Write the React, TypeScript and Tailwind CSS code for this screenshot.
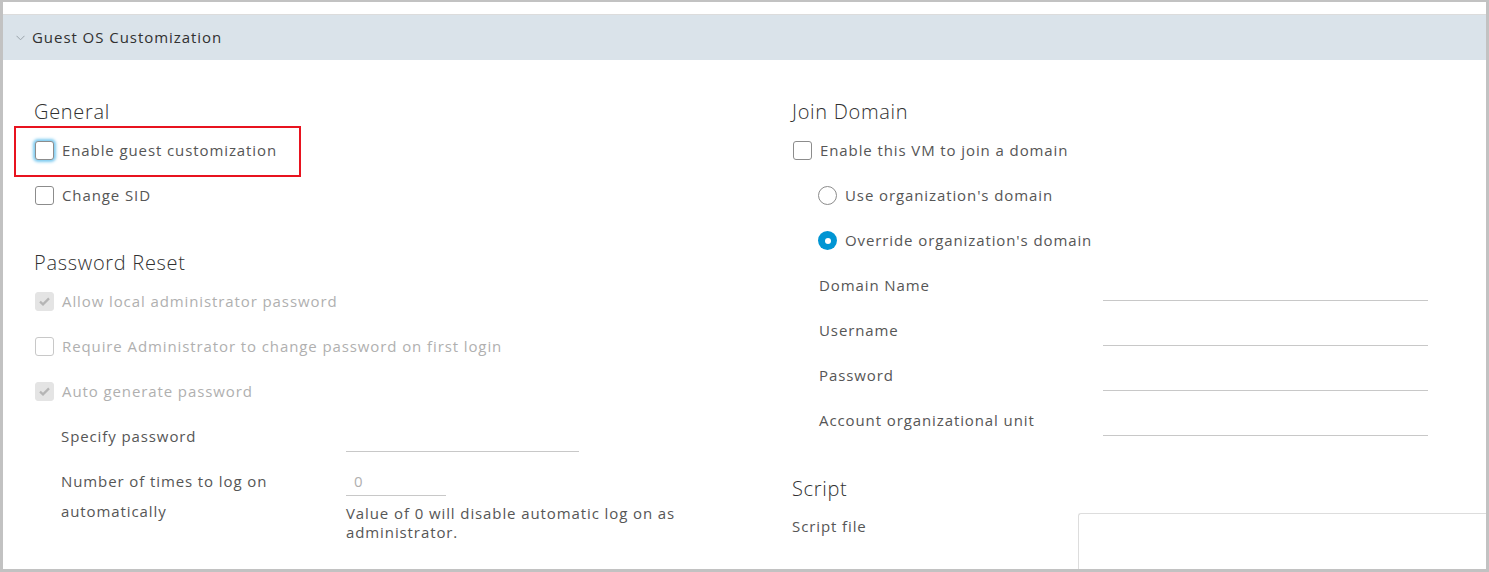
import React from "react";

const font = { fontFamily: '"Open Sans", Lato, sans-serif' };

const Check = ({ checked = false, disabled = false, focus = false }: { checked?: boolean; disabled?: boolean; focus?: boolean }) => {
  const base = "w-[19px] h-[19px] rounded-[3px] flex items-center justify-center shrink-0";
  let cls = "border border-[#8c8c8c] bg-white";
  if (disabled && checked) cls = "bg-[#e4e4e4] border border-[#e4e4e4]";
  else if (disabled) cls = "border border-[#c8c8c8] bg-white";
  return (
    <span className={`${base} ${cls} ${focus ? "shadow-[0_0_3px_2px_#7ecbf0]" : ""}`}>
      {checked && (
        <svg width="11" height="9" viewBox="0 0 11 9">
          <path d="M1 4.6 L4 7.4 L10 1.4" fill="none" stroke="#b5b5b5" strokeWidth="2.2" />
        </svg>
      )}
    </span>
  );
};

const CheckRow = ({ label, checked, disabled, focus }: { label: string; checked?: boolean; disabled?: boolean; focus?: boolean }) => (
  <div className="h-[45px] flex items-center gap-[8px] pl-[1px]">
    <Check checked={checked} disabled={disabled} focus={focus} />
    <span className={`text-[15px] tracking-[0.9px] ${disabled ? "text-[#b0b0b0]" : "text-[#565656]"}`}>{label}</span>
  </div>
);

const Radio = ({ label, checked }: { label: string; checked?: boolean }) => (
  <div className="h-[45px] flex items-center gap-[8px] pl-[26px]">
    {checked ? (
      <span className="w-[19px] h-[19px] rounded-full bg-[#0095d3] flex items-center justify-center">
        <span className="w-[6px] h-[6px] rounded-full bg-white" />
      </span>
    ) : (
      <span className="w-[19px] h-[19px] rounded-full border border-[#8c8c8c] bg-white" />
    )}
    <span className="text-[15px] tracking-[0.9px] text-[#565656]">{label}</span>
  </div>
);

const Field = ({ label }: { label: string }) => (
  <div className="h-[45px] flex items-center pl-[27px]">
    <span className="w-[284px] text-[15px] tracking-[0.9px] text-[#565656]">{label}</span>
    <span className="w-[325px] h-[30px] border-b border-[#c8c8c8]" />
  </div>
);

export default function App() {
  return (
    <div className="w-[1489px] h-[572px] bg-white border-[#c2c2c2] border-t-2 border-l-[3px] border-r-[3px] border-b-[3px] overflow-hidden" style={font}>
      <div className="h-[12px]" />
      <div className="h-[46px] bg-[#dae3ea] border-t border-[#dcdcdc] flex items-center pl-[13px] gap-[7px]">
        <svg width="9" height="6" viewBox="0 0 9 6">
          <path d="M0.5 0.8 L4.5 4.8 L8.5 0.8" fill="none" stroke="#9aa3aa" strokeWidth="1" />
        </svg>
        <span className="text-[15px] tracking-[0.95px] text-[#313131]">Guest OS Customization</span>
      </div>

      <div className="flex pl-[31px]">
        {/* left column */}
        <div className="w-[758px] flex flex-col pt-[40px]">
          <h3 className="text-[20px] leading-[24px] tracking-[0.7px] font-light text-[#313131] mb-[4px]">General</h3>
          <div className="relative">
            <div className="absolute left-[-20px] top-[-2px] w-[287px] h-[51px] border-2 border-[#e8131f]" />
            <CheckRow label="Enable guest customization" focus />
          </div>
          <CheckRow label="Change SID" />

          <h3 className="text-[20px] leading-[24px] tracking-[0.7px] font-light text-[#313131] mt-[33px] mb-[4px]">Password Reset</h3>
          <CheckRow label="Allow local administrator password" checked disabled />
          <CheckRow label="Require Administrator to change password on first login" disabled />
          <CheckRow label="Auto generate password" checked disabled />

          <div className="h-[45px] flex items-center pl-[27px]">
            <span className="w-[285px] text-[15px] tracking-[0.9px] text-[#565656]">Specify password</span>
            <span className="w-[233px] h-[30px] border-b border-[#c8c8c8]" />
          </div>

          <div className="flex pl-[27px] mt-[7px]">
            <span className="w-[285px] text-[15px] leading-[30px] tracking-[0.9px] text-[#565656]">
              Number of times to log on
              <br />
              automatically
            </span>
            <div className="flex flex-col">
              <span className="w-[100px] h-[30px] border-b border-[#c8c8c8] text-[15px] leading-[30px] text-[#b0b0b0] pl-[8px]">0</span>
              <span className="mt-[8px] w-[345px] text-[15px] leading-[19px] tracking-[0.9px] text-[#565656]">
                Value of 0 will disable automatic log on as administrator.
              </span>
            </div>
          </div>
        </div>

        {/* right column */}
        <div className="flex-1 flex flex-col pt-[40px]">
          <h3 className="text-[20px] leading-[24px] tracking-[0.7px] font-light text-[#313131] mb-[4px]">Join Domain</h3>
          <CheckRow label="Enable this VM to join a domain" />
          <Radio label="Use organization's domain" />
          <Radio label="Override organization's domain" checked />
          <Field label="Domain Name" />
          <Field label="Username" />
          <Field label="Password" />
          <Field label="Account organizational unit" />

          <h3 className="text-[20px] leading-[24px] tracking-[0.7px] font-light text-[#313131] mt-[34px]">Script</h3>
          <div className="flex mt-[12px]">
            <span className="w-[286px] text-[15px] leading-[26px] tracking-[0.9px] text-[#565656]">Script file</span>
            <div className="flex-1 h-[80px] border-t border-l border-[#dddddd] rounded-tl-[3px]" />
          </div>
        </div>
      </div>
    </div>
  );
}
